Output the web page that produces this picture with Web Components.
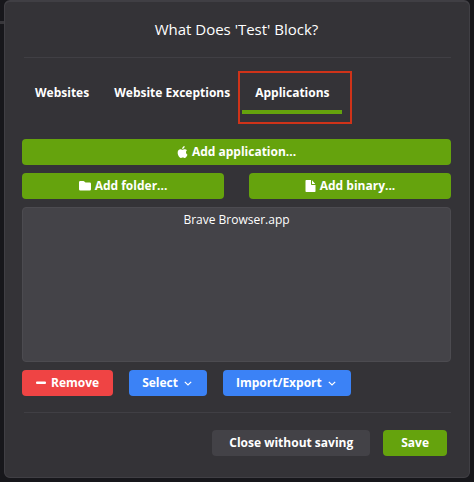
<!DOCTYPE html>
<html lang="en">
<head>
<meta charset="utf-8">
<meta name="viewport" content="width=device-width, initial-scale=1">
<title>Block settings</title>
<style>
    body {
        margin: 0;
        min-height: 100vh;
        background: linear-gradient(#38373b, #38373b) 0 21px / 5px 3px no-repeat, #17171b;
        color: #fff;
        font-family: "Open Sans", "Noto Sans", sans-serif;
        font-size: 12px;
        line-height: 18px;
    }
</style>
</head>
<body>
<block-dialog>
    <span slot="title">What Does 'Test' Block?</span>
    <tab-bar slot="tabs">
        <tab-item>Websites</tab-item>
        <tab-item>Website Exceptions</tab-item>
        <tab-item selected marked>Applications</tab-item>
    </tab-bar>
    <button-row>
        <action-button kind="add" icon="apple" wide>Add application...</action-button>
    </button-row>
    <button-row spread>
        <action-button kind="add" icon="folder" wide>Add folder...</action-button>
        <action-button kind="add" icon="file" wide>Add binary...</action-button>
    </button-row>
    <app-list>
        <app-entry>Brave Browser.app</app-entry>
    </app-list>
    <button-row>
        <action-button kind="remove" icon="minus">Remove</action-button>
        <action-button kind="menu" menu>Select</action-button>
        <action-button kind="menu" menu>Import/Export</action-button>
    </button-row>
    <action-button slot="footer" kind="close">Close without saving</action-button>
    <action-button slot="footer" kind="add">Save</action-button>
</block-dialog>

<script>
const ICONS = {
    apple: `<svg width="11" height="12" viewBox="0 0 22 24"><path d="M15.2.2c.2 1.500-.4 2.900-1.200 4-1 1.200-2.300 1.900-3.600 1.800-.2-1.500.4-2.900 1.300-3.900C12.600 1 14 .3 15.200.2zM20 8.300c-1.300.8-2 2.300-2 4.200 0 2.300 1.200 4 3 4.900-.6 1.900-1.700 3.600-2.900 4.900-1.300 1.600-2.700 1.800-4.200 1.100-1.700-.7-3-.7-4.700 0-1.600.7-2.900.4-4.100-1C1.100 18.300.2 11.900 2.800 8.700c1.700-2.100 4-2.600 6.200-1.700 1.400.6 2.500.6 3.900 0C15.600 6 18.300 6.300 20 8.300z"/></svg>`,
    folder: `<svg width="12" height="12" viewBox="0 0 24 24"><path d="M2.500 2h6.500q1 0 1.700.8L13 5h8.500Q24 5 24 7.500v11q0 2.500-2.500 2.500h-19Q0 21 0 18.500v-14Q0 2 2.500 2z"/></svg>`,
    file: `<svg width="11" height="12" viewBox="0 0 22 24"><path d="M2.500 0H12v8.500q0 1.500 1.500 1.500H21v12.500q0 1.500-1.500 1.500h-17Q1 24 1 22.500v-21Q1 0 2.500 0zM14 .5 20.500 8H14z"/></svg>`,
    minus: `<svg width="10" height="12" viewBox="0 0 10 12"><rect y="4.500" width="10" height="2.500" rx="1"/></svg>`,
    chevron: `<svg width="8" height="8" viewBox="0 0 8 8"><path d="M.8 2.800 4 6l3.200-3.200" fill="none" stroke="currentColor" stroke-width="1.200"/></svg>`,
};

class BlockDialog extends HTMLElement {
    connectedCallback() {
        const shadow = this.attachShadow({ mode: "open" });
        shadow.innerHTML = `<style>
            :host {
                display: block;
                padding: 0 4px 4px;
            }

            section {
                padding: 0 18px 21px 17px;
                border: 1px solid #403f44;
                border-top-width: 2px;
                border-radius: 6px;
                background-color: #343337;
            }

            h1 {
                margin: 0;
                padding: 16px 0;
                font-size: 15px;
                line-height: 23px;
                font-weight: normal;
                text-align: center;
            }

            hr {
                margin: 0 0 0 2px;
                border: 0;
                border-top: 1px solid #403f44;
            }

            main {
                display: flex;
                flex-direction: column;
                gap: 8px;
                padding: 25px 0 16px;
            }

            footer {
                display: flex;
                justify-content: flex-end;
                gap: 13px;
                padding: 17px 4px 0 0;
            }
        </style>
        <section role="dialog" aria-labelledby="title">
            <h1 id="title"><slot name="title"></slot></h1>
            <hr>
            <slot name="tabs"></slot>
            <main><slot></slot></main>
            <hr>
            <footer><slot name="footer"></slot></footer>
        </section>`;
    }
}

class TabBar extends HTMLElement {
    connectedCallback() {
        const shadow = this.attachShadow({ mode: "open" });
        shadow.innerHTML = `<style>
            :host {
                display: flex;
                padding-top: 22px;
            }
        </style>
        <slot></slot>`;
        this.setAttribute("role", "tablist");
    }
}

class TabItem extends HTMLElement {
    connectedCallback() {
        const shadow = this.attachShadow({ mode: "open" });
        shadow.innerHTML = `<style>
            :host {
                display: block;
                position: relative;
            }

            button {
                display: block;
                padding: 4px 12px 8px 13px;
                border: 0;
                border-bottom: 4px solid transparent;
                background: none;
                color: inherit;
                font: inherit;
                font-weight: bold;
                white-space: nowrap;
            }

            :host([selected]) button {
                border-color: #65a30d;
            }

            :host([marked])::after {
                content: "";
                position: absolute;
                inset: -9px -10px -10px -4px;
                border: 2px solid #cf3319;
                pointer-events: none;
            }
        </style>
        <button type="button" role="tab" aria-selected="${this.hasAttribute("selected")}"><slot></slot></button>`;
    }
}

class ButtonRow extends HTMLElement {
    connectedCallback() {
        const shadow = this.attachShadow({ mode: "open" });
        shadow.innerHTML = `<style>
            :host {
                display: flex;
                gap: 16px;
            }

            :host([spread]) {
                gap: 25px;
            }
        </style>
        <slot></slot>`;
    }
}

class ActionButton extends HTMLElement {
    connectedCallback() {
        const shadow = this.attachShadow({ mode: "open" });
        const icon = ICONS[this.getAttribute("icon")] || "";
        const chevron = this.hasAttribute("menu") ? ICONS.chevron : "";
        shadow.innerHTML = `<style>
            :host {
                display: block;
            }

            :host([wide]) {
                flex: 1;
            }

            button {
                display: flex;
                align-items: center;
                justify-content: center;
                gap: 4px;
                width: 100%;
                padding: 4px 18px;
                border: 0;
                border-radius: 4px;
                background-color: #65a30d;
                color: inherit;
                font: inherit;
                font-weight: bold;
                white-space: nowrap;
            }

            :host([kind="remove"]) button {
                gap: 5px;
                padding: 4px 14px;
                background-color: #ef4444;
            }

            :host([kind="menu"]) button {
                gap: 6px;
                padding: 4px 15px 4px 13px;
                background-color: #3b82f6;
            }

            :host([kind="close"]) button {
                padding: 4px 17px;
                background-color: #434247;
            }

            svg {
                flex: none;
                fill: currentColor;
            }
        </style>
        <button type="button">${icon}<span><slot></slot></span>${chevron}</button>`;
    }
}

class AppList extends HTMLElement {
    connectedCallback() {
        const shadow = this.attachShadow({ mode: "open" });
        shadow.innerHTML = `<style>
            :host {
                display: block;
                min-height: 147px;
                padding: 3px;
                border: 1px solid #4c4b50;
                border-radius: 4px;
                background-color: #444348;
            }
        </style>
        <slot></slot>`;
        this.setAttribute("role", "list");
    }
}

class AppEntry extends HTMLElement {
    connectedCallback() {
        const shadow = this.attachShadow({ mode: "open" });
        shadow.innerHTML = `<style>
            :host {
                display: block;
                text-align: center;
            }
        </style>
        <slot></slot>`;
        this.setAttribute("role", "listitem");
    }
}

customElements.define("block-dialog", BlockDialog);
customElements.define("tab-bar", TabBar);
customElements.define("tab-item", TabItem);
customElements.define("button-row", ButtonRow);
customElements.define("action-button", ActionButton);
customElements.define("app-list", AppList);
customElements.define("app-entry", AppEntry);
</script>
</body>
</html>
